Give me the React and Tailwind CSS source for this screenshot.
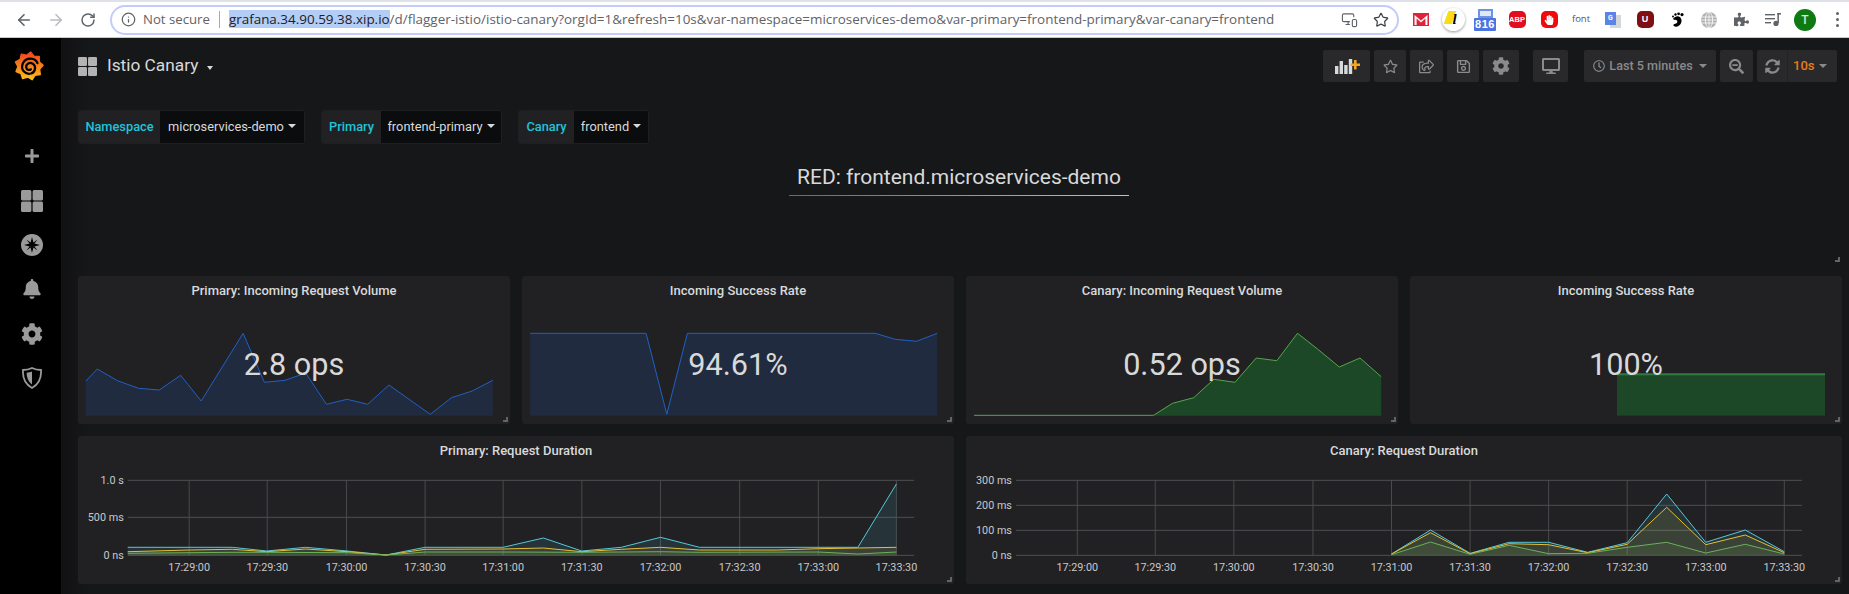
import { ArrowLeft, ArrowRight, RotateCw, Info, Star, MonitorSmartphone } from 'lucide-react';
import { FaCog, FaRegStar, FaRegShareSquare, FaRegSave, FaDesktop, FaRegClock, FaSearchMinus, FaSyncAlt, FaPuzzlePiece, FaPlus, FaBell, FaHandPaper } from 'react-icons/fa';

// Chart points below were read off zoomed crops, so convert them to panel-local pixels
const toPanel = (pts, sx, sy, ox, oy, x0, y0) =>
  pts.map(([x, y]) => [ox + x / sx - x0, oy + y / sy - y0]);
const line = (pts) => pts.map(([x, y]) => `${x.toFixed(1)},${y.toFixed(1)}`).join(' ');
const area = (pts, base) =>
  `${pts[0][0].toFixed(1)},${base} ${line(pts)} ${pts[pts.length - 1][0].toFixed(1)},${base}`;

const P1 = toPanel([[45,333],[65,297],[100,332],[137,355],[173,360],[210,316],[246,393],[319,190],[356,337],[392,331],[428,309],[464,403],[500,388],[536,403],[573,345],[645,433],[682,383],[718,363],[754,331]], 1.742, 3, 60, 270, 78, 276);
const P2 = toPanel([[819,190],[1021,190],[1057,433],[1093,190],[1420,190],[1455,208],[1492,214],[1528,190]], 1.742, 3, 60, 270, 522, 276);
const P3 = toPanel([[42,436],[355,436],[388,400],[425,383],[460,328],[497,337],[534,264],[570,272],[606,190],[641,237],[679,291],[715,264],[752,320]], 1.744, 3, 950, 270, 966, 276);

const PRIMARY_SERIES = {
  cyan: [[118,352],[300,352],[360,363],[428,352],[500,363],[568,375],[636,352],[772,352],[842,324],[909,363],[978,352],[1046,322],[1114,352],[1390,352],[1457,162]],
  yellow: [[118,365],[225,360],[300,358],[360,365],[428,357],[500,365],[568,375],[636,358],[772,357],[842,354],[909,365],[978,358],[1046,352],[1114,360],[1250,360],[1321,356],[1390,354],[1457,352]],
  green: [[118,370],[300,367],[360,367],[500,368],[568,375],[636,366],[772,366],[909,367],[1046,365],[1114,367],[1321,366],[1390,372],[1457,366]],
};
const CANARY_SERIES = {
  cyan: [[770,372],[838,300],[907,370],[975,337],[1044,337],[1112,367],[1181,338],[1250,192],[1318,337],[1387,300],[1455,365]],
  yellow: [[770,372],[838,308],[907,371],[975,341],[1044,344],[1112,368],[1181,343],[1250,232],[1318,344],[1387,315],[1455,368]],
  green: [[770,374],[838,336],[907,373],[975,346],[1044,371],[1112,370],[1181,352],[1250,337],[1318,369],[1387,343],[1455,372]],
};
const SERIES_COLORS = { cyan: '#56c7d8', yellow: '#e5c033', green: '#6cb05c' };
const TIMES = ['17:29:00','17:29:30','17:30:00','17:30:30','17:31:00','17:31:30','17:32:00','17:32:30','17:33:00','17:33:30'];

function ResizeHandle() {
  return <div className="absolute right-[2px] bottom-[2px] h-[5px] w-[5px] border-r-2 border-b-2 border-[#646466]" />;
}

function Panel({ title, children }) {
  return (
    <div className="relative h-[148px] rounded-[3px] bg-[#212124]">
      <div className="flex h-[30px] items-center justify-center text-[13px] font-medium text-[#d8d9da]">{title}</div>
      {children}
      <ResizeHandle />
    </div>
  );
}

function BigValue({ children }) {
  return <div className="absolute inset-x-0 top-[69px] text-center text-[30.6px] leading-[40px] text-[#d8d9da]">{children}</div>;
}

function Stat({ title, value, pts, stroke, fill, base = 139.7 }) {
  return (
    <Panel title={title}>
      <svg className="block h-[118px] w-full" viewBox="0 30 432 118">
        <polygon points={area(pts, base)} fill={fill} />
        <polyline points={line(pts)} fill="none" stroke={stroke} strokeWidth="1" />
      </svg>
      <BigValue>{value}</BigValue>
    </Panel>
  );
}

function FlatStat({ title, value }) {
  return (
    <Panel title={title}>
      <svg className="block h-[118px] w-full" viewBox="0 30 432 118">
        <rect x="207" y="97.3" width="208" height="42.3" fill="#1c4827" />
        <rect x="207" y="97.3" width="208" height="2" fill="#2f7a3f" />
      </svg>
      <BigValue>{value}</BigValue>
    </Panel>
  );
}

function Graph({ title, sx, ox, x0, yLabels, xTicks, series, left, right }) {
  const gx = (z) => ox + z / sx - x0;
  const gy = (z) => 430 + z / 3 - 436;
  return (
    <Panel title={title}>
      <svg className="block h-[118px] w-full" viewBox="0 30 876 118" fontFamily="Roboto, sans-serif" fontSize="10.8" fill="#c7c8ca">
        {xTicks.map((z) => (
          <line key={z} x1={gx(z)} x2={gx(z)} y1={gy(151)} y2={gy(376)} stroke="#4a4a4d" strokeWidth="1" />
        ))}
        {yLabels.map(([label, z]) => (
          <g key={label}>
            <line x1={gx(left)} x2={gx(right)} y1={gy(z)} y2={gy(z)} stroke="#4f4f52" strokeWidth="1" />
            <text x={gx(left) - 4} y={gy(z) + 4} textAnchor="end">{label}</text>
          </g>
        ))}
        {['cyan', 'yellow', 'green'].map((key) => {
          const pts = series[key].map(([x, y]) => [gx(x), gy(y)]);
          return (
            <g key={key}>
              <polygon points={area(pts, gy(376))} fill={SERIES_COLORS[key]} fillOpacity="0.11" stroke="none" />
              <polyline points={line(pts)} fill="none" stroke={SERIES_COLORS[key]} strokeWidth="1" />
            </g>
          );
        })}
        {xTicks.map((z, i) => (
          <text key={i} x={gx(z)} y={gy(412) + 4} textAnchor="middle">{TIMES[i]}</text>
        ))}
      </svg>
    </Panel>
  );
}

function VariablePicker({ label, value, labelW, valueW }) {
  return (
    <div className="flex h-[34px] overflow-hidden rounded-[3px] border border-[#1f1f21] text-[12.8px]">
      <div className={`flex items-center justify-center bg-[#212124] font-medium text-[#1fc4d8] ${labelW}`}>{label}</div>
      <div className={`flex items-center justify-center gap-[4px] bg-[#0b0c0e] text-[#d8d9da] ${valueW}`}>
        {value}
        <span className="mb-[2px] border-x-[4px] border-t-[4px] border-x-transparent border-t-[#d8d9da]" />
      </div>
    </div>
  );
}

function ToolButton({ className, children }) {
  return (
    <div className={`flex h-[32px] items-center justify-center rounded-[2px] bg-[#29292b] text-[#8a8a8c] ${className}`}>
      {children}
    </div>
  );
}

function DashIcon({ size, color }) {
  return (
    <svg width={size} height={size} viewBox="0 0 22 22" fill={color}>
      <rect x="0" y="0" width="10.4" height="10.4" rx="1.5" />
      <rect x="11.6" y="0" width="10.4" height="10.4" rx="1.5" />
      <rect x="0" y="11.6" width="10.4" height="10.4" rx="1.5" />
      <rect x="11.6" y="11.6" width="10.4" height="10.4" rx="1.5" />
    </svg>
  );
}

function GrafanaLogo() {
  const pts = [];
  const teeth = 9;
  for (let i = 0; i < teeth * 2; i++) {
    const a = (i / (teeth * 2)) * Math.PI * 2 - Math.PI / 2 + 0.12;
    const r = i % 2 === 0 ? 15 : 11.8;
    pts.push(`${(16 + r * Math.cos(a)).toFixed(1)},${(16 + r * Math.sin(a)).toFixed(1)}`);
  }
  return (
    <svg width="30" height="32" viewBox="0 0 32 32">
      <defs>
        <linearGradient id="grafanaGrad" x1="0" y1="0" x2="0" y2="1">
          <stop offset="0" stopColor="#f0431f" />
          <stop offset="0.55" stopColor="#f7861b" />
          <stop offset="1" stopColor="#fcc21c" />
        </linearGradient>
      </defs>
      <polygon points={pts.join(' ')} fill="url(#grafanaGrad)" strokeLinejoin="round" stroke="url(#grafanaGrad)" strokeWidth="1.5" />
      <path d="M25 13 C23 7 13 6 9.5 13 C6.5 20 12 25.5 18 24 C23 22.5 24 16 20 13.5 C16.5 11.5 12.5 14 13 17.5 C13.4 20 16 21 18 19.5" fill="none" stroke="#000" strokeWidth="2.4" strokeLinecap="round" />
    </svg>
  );
}

function CompassIcon() {
  return (
    <svg width="22" height="22" viewBox="0 0 22 22">
      <circle cx="11" cy="11" r="11" fill="#9a9a9a" />
      <path d="M11 3 L12.4 8.6 L16.6 5.4 L13.4 9.6 L19 11 L13.4 12.4 L16.6 16.6 L12.4 13.4 L11 19 L9.6 13.4 L5.4 16.6 L8.6 12.4 L3 11 L8.6 9.6 L5.4 5.4 L9.6 8.6 Z" fill="#000" />
    </svg>
  );
}

function ShieldIcon() {
  return (
    <svg width="20" height="22" viewBox="0 0 20 22">
      <path d="M10 1 C13 2.5 16 3 19 3 C19.5 10 17 17 10 21 C3 17 .5 10 1 3 C4 3 7 2.5 10 1 Z" fill="none" stroke="#9a9a9a" strokeWidth="1.8" />
      <path d="M10 4.5 C8.5 5.2 6.5 5.6 4.6 5.8 C4.6 10.5 6.4 15 10 17.6 Z" fill="#9a9a9a" />
    </svg>
  );
}

function AddPanelIcon() {
  return (
    <svg width="26" height="16" viewBox="0 0 26 16">
      <rect x="1" y="8" width="3.4" height="8" fill="#d8d9da" />
      <rect x="5.6" y="3" width="3.4" height="13" fill="#d8d9da" />
      <rect x="10.2" y="7" width="3.4" height="9" fill="#d8d9da" />
      <rect x="14.8" y="1" width="3.4" height="15" fill="#d8d9da" />
      <path d="M20 2 h2.6 v3.4 H26 V8 h-3.4 v3.4 H20 V8 h-3.4 V5.4 H20 Z" fill="#f5a623" />
    </svg>
  );
}

function ExtIcon({ children }) {
  return <div className="relative flex h-[32px] w-[32px] items-center justify-center">{children}</div>;
}

function ChromeBar() {
  return (
    <div className="flex h-[38px] items-center border-t-2 border-b border-t-[#dee1e6] border-b-[#c9cacc] bg-white">
      <div className="flex w-[110px] shrink-0 items-center text-[#5f6368]">
        <ArrowLeft className="ml-[15px]" size={18} strokeWidth={2.2} />
        <ArrowRight className="ml-[14px] text-[#b9bcc0]" size={18} strokeWidth={2.2} />
        <RotateCw className="ml-[15px]" size={16} strokeWidth={2.2} />
      </div>
      <div className="flex h-[30px] w-[1289px] shrink-0 items-center rounded-full border-2 border-[#c3cbfb] font-['Open_Sans',sans-serif] text-[13.2px] text-[#5f6368]">
        <Info className="ml-[9px]" size={15} strokeWidth={2} />
        <span className="ml-[7px]">Not secure</span>
        <span className="ml-[9px] h-[17px] w-px bg-[#a8abae]" />
        <span className="ml-[9px] text-[13.45px] whitespace-nowrap">
          <span className="bg-[#b3cdf7] text-[#202124]">grafana.34.90.59.38.xip.io</span>
          /d/flagger-istio/istio-canary?orgId=1&amp;refresh=10s&amp;var-namespace=microservices-demo&amp;var-primary=frontend-primary&amp;var-canary=frontend
        </span>
        <span className="flex-1" />
        <MonitorSmartphone size={17} strokeWidth={1.6} />
        <Star className="mr-[8px] ml-[15px] text-[#3c4043]" size={16} strokeWidth={1.8} />
      </div>
      <div className="ml-[6px] flex items-center">
        <ExtIcon>
          <svg width="16" height="13" viewBox="0 0 16 13">
            <rect width="16" height="13" fill="#e0233a" />
            <path d="M1.5 2 L8 7.6 L14.5 2 V12 H12.4 V5.6 L8 9.6 L3.6 5.6 V12 H1.5 Z" fill="#f7f7f7" />
          </svg>
        </ExtIcon>
        <ExtIcon>
          <div className="relative h-[23px] w-[23px] overflow-hidden rounded-full bg-white shadow-[0_1px_3px_rgba(0,0,0,0.4)]">
            <span className="absolute top-[3px] left-[4px] h-[13px] w-[8px] skew-x-[-20deg] bg-[#fbdc12]" />
            <span className="absolute top-[4px] left-[11px] font-['Liberation_Serif',serif] text-[15px] leading-[15px] font-bold text-black italic">l</span>
          </div>
        </ExtIcon>
        <ExtIcon>
          <div className="flex flex-col items-center">
            <div className="relative h-[9px] w-[15px] bg-[#6b93e6]">
              <span className="absolute top-[2px] left-[2px] h-[5px] w-[11px] bg-[#dfe7fa]" />
            </div>
            <div className="h-[13px] w-[22px] rounded-[1px] bg-[#4c73e0] text-center font-['Liberation_Sans',sans-serif] text-[11px] leading-[13px] font-bold tracking-[0.5px] text-white">816</div>
          </div>
        </ExtIcon>
        <ExtIcon>
          <div className="flex h-[17px] w-[17px] items-center justify-center rounded-[5px] bg-[#e30d1b] font-['Liberation_Sans',sans-serif] text-[7.5px] font-bold text-white">ABP</div>
        </ExtIcon>
        <ExtIcon>
          <div className="flex h-[17px] w-[17px] items-center justify-center rounded-[5px] bg-[#f00a0a] text-white"><FaHandPaper size={10} /></div>
        </ExtIcon>
        <ExtIcon>
          <span className="font-['Open_Sans',sans-serif] text-[9.5px] text-[#555]">font</span>
        </ExtIcon>
        <ExtIcon>
          <div className="relative h-[16px] w-[16px]">
            <div className="absolute top-[3px] left-[5px] h-[13px] w-[11px] bg-[#d5d8db]" />
            <div className="absolute top-0 left-0 flex h-[13px] w-[11px] items-center justify-center bg-[#5b84e6] text-[7px] font-bold text-white">G</div>
          </div>
        </ExtIcon>
        <ExtIcon>
          <div className="flex h-[17px] w-[17px] items-center justify-center rounded-[5px] bg-[#800f12] font-['Liberation_Sans',sans-serif] text-[9px] font-bold text-white">U</div>
        </ExtIcon>
        <ExtIcon>
          <svg width="14" height="16" viewBox="0 0 14 16">
            <path d="M3 7 C6 2.5 11 4 11.5 8 C12 12 8 15.5 5 14.5 C3 14 2.8 12.5 4.5 12 C7 11.5 8 10 7 8.5 C6 7.5 4.5 8.5 3 7 Z" fill="#000" />
            <circle cx="3" cy="4.5" r="1" /><circle cx="5.5" cy="2.5" r="1.2" /><circle cx="8.6" cy="1.8" r="1.4" /><circle cx="12" cy="2.6" r="1.6" />
          </svg>
        </ExtIcon>
        <ExtIcon>
          <svg width="16" height="16" viewBox="0 0 16 16" fill="none" stroke="#fff" strokeWidth="0.8">
            <circle cx="8" cy="8" r="8" fill="#b0b0b0" stroke="none" />
            <ellipse cx="8" cy="8" rx="3.6" ry="8" />
            <path d="M8 0 V16 M0 5 H16 M0 8 H16 M0 11 H16" />
          </svg>
        </ExtIcon>
        <ExtIcon><FaPuzzlePiece className="text-[#5f6368]" size={15} /></ExtIcon>
        <ExtIcon>
          <svg width="16" height="13" viewBox="0 0 16 13" fill="#5f6368">
            <rect y="1" width="10" height="1.4" /><rect y="5" width="10" height="1.4" /><rect y="9" width="6" height="1.4" />
            <rect x="12.4" y="0" width="1.5" height="10" /><rect x="12.4" y="0" width="3.6" height="1.6" /><circle cx="11" cy="10.4" r="2.6" />
          </svg>
        </ExtIcon>
        <ExtIcon>
          <div className="flex h-[22px] w-[22px] items-center justify-center rounded-full bg-[#0f7a12] font-['Roboto',sans-serif] text-[12px] font-medium text-[#d7ecd7]">T</div>
        </ExtIcon>
        <ExtIcon>
          <div className="flex flex-col gap-[3px]">
            <span className="h-[3px] w-[3px] rounded-full bg-[#5f6368]" />
            <span className="h-[3px] w-[3px] rounded-full bg-[#5f6368]" />
            <span className="h-[3px] w-[3px] rounded-full bg-[#5f6368]" />
          </div>
        </ExtIcon>
      </div>
    </div>
  );
}

function Sidebar() {
  const iconRow = 'flex h-[44.4px] items-center justify-center pl-[3px] text-[#9a9a9a]';
  return (
    <aside className="w-[61px] shrink-0 bg-black">
      <div className="flex h-[96px] items-start justify-center pt-[12px] pr-[3px]">
        <GrafanaLogo />
      </div>
      <div className={iconRow}><FaPlus size={16} /></div>
      <div className={iconRow}><DashIcon size={22} color="#9a9a9a" /></div>
      <div className={iconRow}><CompassIcon /></div>
      <div className={iconRow}><FaBell size={20} /></div>
      <div className={iconRow}><FaCog size={22} /></div>
      <div className={iconRow}><ShieldIcon /></div>
    </aside>
  );
}

function Toolbar() {
  return (
    <div className="flex items-center">
      <ToolButton className="w-[47px]"><AddPanelIcon /></ToolButton>
      <ToolButton className="ml-[4px] w-[32px]"><FaRegStar size={15} /></ToolButton>
      <ToolButton className="ml-[4px] w-[33px]"><FaRegShareSquare size={15} /></ToolButton>
      <ToolButton className="ml-[4px] w-[32px]"><FaRegSave size={15} /></ToolButton>
      <ToolButton className="ml-[4px] w-[36px]"><FaCog size={18} /></ToolButton>
      <ToolButton className="ml-[14px] w-[35px]"><FaDesktop size={18} /></ToolButton>
      <ToolButton className="ml-[16px] w-[132px] gap-[4px] text-[12.6px] font-medium">
        <FaRegClock size={12} />
        Last 5 minutes
        <span className="ml-[2px] border-x-[4px] border-t-[4px] border-x-transparent border-t-[#8a8a8c]" />
      </ToolButton>
      <ToolButton className="ml-[4px] w-[33px]"><FaSearchMinus size={15} /></ToolButton>
      <div className="ml-[4px] flex h-[32px] w-[80px] items-center rounded-[2px] bg-[#29292b] text-[#8a8a8c]">
        <div className="flex h-full w-[31px] items-center justify-center border-r border-[#232325]"><FaSyncAlt size={15} /></div>
        <span className="ml-[5px] text-[13px] font-medium text-[#eb7b18]">10s</span>
        <span className="ml-[5px] border-x-[4px] border-t-[4px] border-x-transparent border-t-[#8a8a8c]" />
      </div>
    </div>
  );
}

export default function App() {
  return (
    <div className="flex h-[594px] w-[1849px] flex-col overflow-hidden bg-[#161719] font-['Roboto',sans-serif]">
      <ChromeBar />
      <div className="flex flex-1">
        <Sidebar />
        <main className="w-[1788px] bg-gradient-to-r from-[#111113] from-0% to-[#161719] to-[1.5%] pt-[12px] pr-[7px] pl-[17px]">
          <header className="flex h-[32px] items-center justify-between">
            <div className="flex items-center">
              <DashIcon size={19} color="#b3b3b3" />
              <span className="ml-[10px] text-[17.3px] text-[#d8d9da]">Istio Canary</span>
              <span className="mt-[3px] ml-[9px] border-x-[3.5px] border-t-[4px] border-x-transparent border-t-[#d8d9da]" />
            </div>
            <div className="mr-[5px]"><Toolbar /></div>
          </header>

          <div className="mt-[28px] flex gap-[16px]">
            <VariablePicker label="Namespace" value="microservices-demo" labelW="w-[81px]" valueW="w-[144px]" />
            <VariablePicker label="Primary" value="frontend-primary" labelW="w-[59px]" valueW="w-[120px]" />
            <VariablePicker label="Canary" value="frontend" labelW="w-[55px]" valueW="w-[74px]" />
          </div>

          <section className="relative mt-[12px] flex h-[108px] justify-center">
            <div className="mr-[2px] h-[40px] w-[340px] border-b border-transparent text-center text-[21px] leading-[42px] text-[#d8d9da] [border-image:linear-gradient(90deg,#e0392b,#f2c61f)_1]">
              RED: frontend.microservices-demo
            </div>
            <ResizeHandle />
          </section>

          <div className="mt-[12px] grid grid-cols-4 gap-[12px]">
            <Stat title="Primary: Incoming Request Volume" value="2.8 ops" pts={P1} stroke="#1f60c4" fill="#202b3f" />
            <Stat title="Incoming Success Rate" value="94.61%" pts={P2} stroke="#1f60c4" fill="#202b3f" />
            <Stat title="Canary: Incoming Request Volume" value="0.52 ops" pts={P3} stroke="#56a64b" fill="#1c4827" />
            <FlatStat title="Incoming Success Rate" value="100%" />
          </div>

          <div className="mt-[12px] grid grid-cols-2 gap-[12px]">
            <Graph
              title="Primary: Request Duration"
              sx={1.742} ox={60} x0={78} left={118} right={1488}
              yLabels={[['1.0 s', 151], ['500 ms', 262], ['0 ns', 376]]}
              xTicks={[225, 361, 499, 636, 772, 909, 1046, 1184, 1321, 1457]}
              series={PRIMARY_SERIES}
            />
            <Graph
              title="Canary: Request Duration"
              sx={1.744} ox={950} x0={966} left={115} right={1486}
              yLabels={[['300 ms', 151], ['200 ms', 226], ['100 ms', 301], ['0 ns', 376]]}
              xTicks={[222, 358, 495, 633, 770, 907, 1044, 1181, 1318, 1455]}
              series={CANARY_SERIES}
            />
          </div>
        </main>
      </div>
    </div>
  );
}
